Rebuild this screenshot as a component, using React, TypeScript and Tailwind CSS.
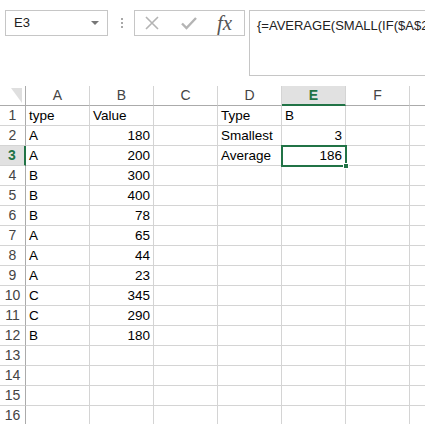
const cols = ["A", "B", "C", "D", "E", "F", "G"];

type Cell = { v: string; right?: boolean };

const data: Record<number, Cell[]> = {
  1: [{ v: "type" }, { v: "Value" }, { v: "" }, { v: "Type" }, { v: "B" }],
  2: [{ v: "A" }, { v: "180", right: true }, { v: "" }, { v: "Smallest" }, { v: "3", right: true }],
  3: [{ v: "A" }, { v: "200", right: true }, { v: "" }, { v: "Average" }, { v: "186", right: true }],
  4: [{ v: "B" }, { v: "300", right: true }],
  5: [{ v: "B" }, { v: "400", right: true }],
  6: [{ v: "B" }, { v: "78", right: true }],
  7: [{ v: "A" }, { v: "65", right: true }],
  8: [{ v: "A" }, { v: "44", right: true }],
  9: [{ v: "A" }, { v: "23", right: true }],
  10: [{ v: "C" }, { v: "345", right: true }],
  11: [{ v: "C" }, { v: "290", right: true }],
  12: [{ v: "B" }, { v: "180", right: true }],
};

const rows = Array.from({ length: 16 }, (_, i) => i + 1);

function FormulaBar() {
  return (
    <div className="flex h-[86px] items-start pt-[10px] pl-[5px]">
      <div className="relative flex h-[26px] w-[103px] items-center border border-[#c6c6c6] pl-[8px] text-[13px] text-[#222]">
        E3
        <div className="absolute right-[8px] top-[10px] h-0 w-0 border-x-[4px] border-t-[4px] border-x-transparent border-t-[#777]" />
      </div>
      <div className="ml-[13px] mt-[8px] flex flex-col gap-[2px]">
        <div className="h-[2px] w-[2px] bg-[#a8a8a8]" />
        <div className="h-[2px] w-[2px] bg-[#a8a8a8]" />
        <div className="h-[2px] w-[2px] bg-[#a8a8a8]" />
      </div>
      <div className="ml-[11px] flex h-[26px] w-[111px] items-center border border-[#c6c6c6]">
        <svg width="16" height="16" viewBox="0 0 16 16" className="ml-[9px]">
          <path d="M2 2 L14 14 M14 2 L2 14" stroke="#b4b4b4" strokeWidth="1.6" fill="none" />
        </svg>
        <svg width="18" height="16" viewBox="0 0 18 16" className="ml-[20px]">
          <path d="M2 8.5 L6.5 13 L16 3" stroke="#b4b4b4" strokeWidth="2.4" fill="none" />
        </svg>
        <span className="ml-[19px] font-['Liberation_Serif',serif] text-[21px] italic leading-none text-[#555]">
          fx
        </span>
      </div>
      <div className="ml-[4px] h-[66px] flex-1 overflow-hidden whitespace-nowrap border border-r-0 border-[#c6c6c6] pl-[7px] pt-[5px] text-[13px] text-[#222]">
        {"{=AVERAGE(SMALL(IF($A$2:"}
      </div>
    </div>
  );
}

function Grid() {
  return (
    <div className="relative">
      <div className="flex h-[20px]">
        <div className="relative w-[26px] shrink-0 border-r border-b border-[#ababab]">
          <div className="absolute left-[11px] top-[2px] h-0 w-0 border-l-[11px] border-t-[15px] border-l-transparent border-t-[#dfdfdf]" />
        </div>
        {cols.map((c) =>
          c === "E" ? (
            <div
              key={c}
              className="flex w-[64px] shrink-0 items-center justify-center border-r border-b-2 border-r-[#d4d4d4] border-b-[#217346] bg-[#e1e1e1] text-[14px] font-bold text-[#217346]"
            >
              {c}
            </div>
          ) : (
            <div
              key={c}
              className="flex w-[64px] shrink-0 items-center justify-center border-r border-b border-r-[#d4d4d4] border-b-[#ababab] text-[14px] text-[#444]"
            >
              {c === "G" ? "" : c}
            </div>
          )
        )}
      </div>
      {rows.map((r) => (
        <div key={r} className="flex h-[20px]">
          {r === 3 ? (
            <div className="flex w-[26px] shrink-0 items-center justify-center border-r-2 border-b border-r-[#217346] border-b-[#d4d4d4] bg-[#e1e1e1] text-[14px] font-bold text-[#217346]">
              {r}
            </div>
          ) : (
            <div className="flex w-[26px] shrink-0 items-center justify-center border-r border-b border-r-[#ababab] border-b-[#d4d4d4] text-[14px] text-[#444]">
              {r}
            </div>
          )}
          {cols.map((c, i) => {
            const cell = data[r]?.[i];
            return (
              <div
                key={c}
                className={
                  "flex w-[64px] shrink-0 items-end border-r border-b border-[#d4d4d4] px-[3px] pb-[1px] text-[13.5px] leading-[17px] text-black " +
                  (cell?.right ? "justify-end" : "justify-start")
                }
              >
                {cell?.v}
              </div>
            );
          })}
        </div>
      ))}
      <div className="absolute left-[281px] top-[59px] h-[22px] w-[66px] border-2 border-[#217346]">
        <div className="absolute -bottom-[4px] -right-[4px] h-[6px] w-[6px] border border-white bg-[#217346]" />
      </div>
    </div>
  );
}

export default function App() {
  return (
    <div className="h-[424px] w-[425px] overflow-hidden bg-white font-['Liberation_Sans',Arial,sans-serif]">
      <FormulaBar />
      <Grid />
    </div>
  );
}
